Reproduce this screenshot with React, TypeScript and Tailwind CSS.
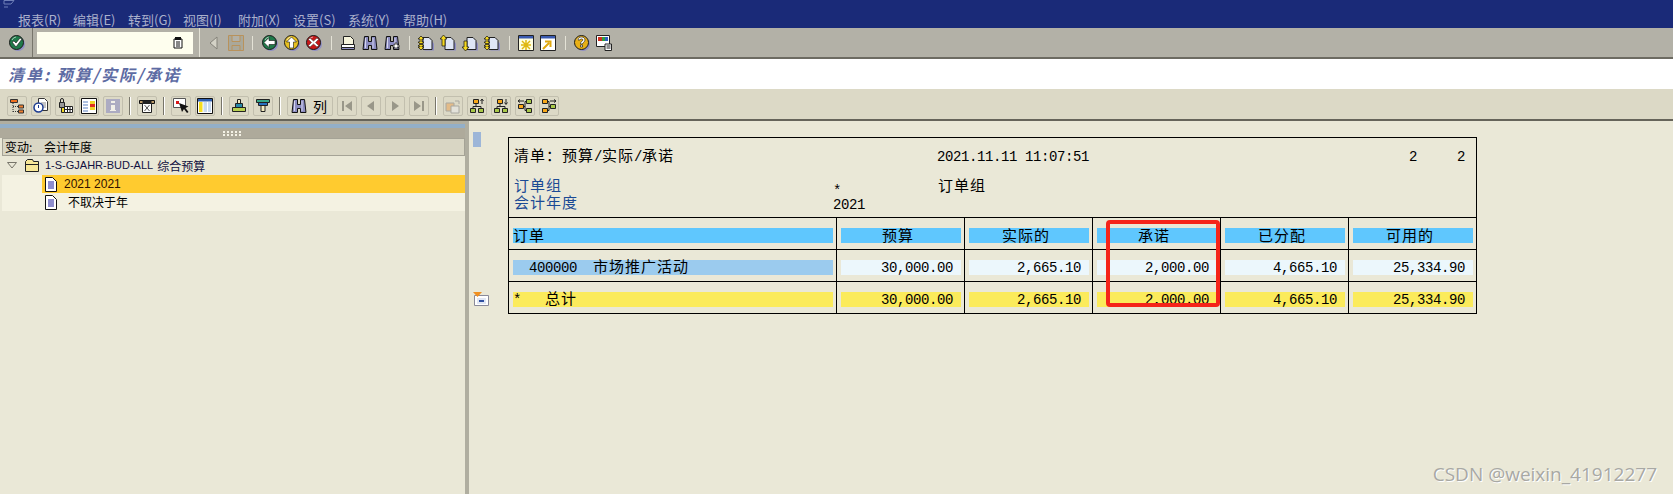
import React from 'react';

const menus = ['报表(R)', '编辑(E)', '转到(G)', '视图(I)', '附加(X)', '设置(S)', '系统(Y)', '帮助(H)'];

// SAP list font: latin cells are 8px wide, CJK cells 16px wide
const Mono = ({ t }: { t: string }) => {
  const runs = t.match(/[\u3000-\u9fff\uff00-\uffef]+|[^\u3000-\u9fff\uff00-\uffef]+/g) ?? [];
  return (
    <>
      {runs.map((r, i) =>
        /^[\u3000-\u9fff\uff00-\uffef]/.test(r) ? (
          <span key={i} className="font-['Noto_Sans_CJK_SC',sans-serif] text-[15px] tracking-[1px]">
            {r}
          </span>
        ) : (
          <span key={i} className="font-['Liberation_Mono',monospace] text-[14px] tracking-[-0.4px] whitespace-pre">
            {r}
          </span>
        ),
      )}
    </>
  );
};

const Ico = ({ children, s = 16 }: { children: React.ReactNode; s?: number }) => (
  <svg width={s} height={s} viewBox="0 0 16 16" className="shrink-0">
    {children}
  </svg>
);

const Round = ({ fill, mark, markStroke = '#111' }: { fill: string; mark: string; markStroke?: string }) => (
  <Ico>
    <circle cx="9" cy="9" r="7" fill="#8f8fc4" />
    <circle cx="7.500" cy="7.500" r="7" fill={fill} stroke="#1a1a1a" />
    <path d="M3 5a5 5 0 0 1 4-3" stroke="#ffffff99" fill="none" />
    <path d={mark} fill="#fff" stroke={markStroke} strokeWidth="0.6" />
  </Ico>
);

const DocArrow = ({ arrows }: { arrows: string }) => (
  <Ico>
    <path d="M6 4.500h6l3 3v7H5.500" fill="#8f8fc4" transform="translate(1 1)" />
    <path d="M5 2.500h6l3 3v9H5z" fill="#dfe6f6" stroke="#222" />
    <path d={arrows} fill="#f4d820" stroke="#111" strokeWidth="0.7" />
  </Ico>
);

const Binoculars = ({ plus }: { plus?: boolean }) => (
  <Ico>
    <path d="M2.500 1.500h4v5h3v-5h4l1.500 13h-5.500v-4h-3v4H1z" fill="#8c8cc0" stroke="#111" />
    <path d="M3.500 3v10M11 3v10" stroke="#d5d5ee" />
    {plus && <path d="M11 8h2v2h2v2h-2v2h-2v-2H9v-2h2z" fill="#fff" stroke="#111" strokeWidth="0.7" />}
  </Ico>
);

const SysSep = ({ ml = 'ml-[9px]' }: { ml?: string }) => <div className={`${ml} w-px h-[14px] bg-[#e4e2d6] shrink-0`} />;

const AppSep = () => <div className="mx-[2px] w-px h-[18px] bg-[#77756a] border-r border-white box-content shrink-0" />;

// button of the application toolbar
const Btn = ({ children, w = 'w-[20px]', off }: { children?: React.ReactNode; w?: string; off?: boolean }) => (
  <div className={`${w} h-[20px] shrink-0 flex items-center justify-center rounded-[2px] border border-[#c2bfae] bg-[#dcd9c6] ${off ? '[&>*]:opacity-60' : ''}`}>
    {children}
  </div>
);

const OrgUp = ({ down }: { down?: boolean }) => (
  <Ico>
    <path d="M4.500 1.500h5v4h-5z" fill="#f8a818" stroke="#222" />
    <path d="M1.500 10.500h5v4h-5zM9.500 10.500h5v4h-5z" fill="#a8c848" stroke="#222" />
    <path d="M7 5.500v3M4 10.500v-2h8v2" stroke="#222" fill="none" />
    <path d={down ? 'M13 1v5M11.500 4.500l1.500 2 1.500-2' : 'M13 6V1M11.500 3l1.500-2 1.500 2'} stroke="#222" fill="none" />
  </Ico>
);

const OrgSide = ({ right }: { right?: boolean }) => (
  <Ico>
    <g transform={right ? 'translate(16 0) scale(-1 1)' : undefined}>
      <path d="M1.500 6.500h5v4h-5z" fill={right ? '#a8c848' : '#f8a818'} stroke="#222" />
      <path d="M9.500 1.500h5v4h-5zM9.500 10.500h5v4h-5z" fill={right ? '#f8a818' : '#a8c848'} stroke="#222" />
      <path d="M6.500 8.500h1.500M8 3.500v9M8 3.500h1.500M8 12.500h1.500" stroke="#222" fill="none" />
      <path d="M1 3h6M3 1.500L1 3l2 1.500" stroke="#222" fill="none" />
    </g>
  </Ico>
);

const Page = () => (
  <svg width="12" height="15" viewBox="0 0 12 15" className="shrink-0">
    <path d="M.5.500h7l4 4v10H.5z" fill="#fff" stroke="#111" />
    <path d="M3 5h6M3 7h6M3 9h6M3 11h6" stroke="#1c1c9c" />
  </svg>
);

const Nav = ({ d }: { d: string }) => (
  <Btn off>
    <svg width="14" height="14" viewBox="0 0 14 14">
      <path d={d} fill="#6e6c62" />
    </svg>
  </Btn>
);

type Row = { label: string; pad: string; labelBg: string; cellBg: string; vals: string[] };

const colHeads = ['预算', '实际的', '承诺', '已分配', '可用的'];

const vals = ['30,000.00', '2,665.10', '2,000.00', '4,665.10', '25,334.90'];

const rows: Row[] = [
  { label: '400000  市场推广活动', pad: 'pl-[16px]', labelBg: 'bg-[#9bcbee]', cellBg: 'bg-[#ecf7fc]', vals },
  { label: '*   总计', pad: '', labelBg: 'bg-[#fbeb5b]', cellBg: 'bg-[#fbeb5b]', vals },
];

export default function App() {
  return (
    <div className="w-[1673px] h-[494px] overflow-hidden flex flex-col bg-[#eae8d7] text-black font-['Noto_Sans_CJK_SC',sans-serif]">
      {/* menu bar */}
      <div className="h-[28px] bg-[#1a2a78] relative flex items-end pl-[18px] shrink-0">
        <svg width="16" height="8" viewBox="0 0 16 8" className="absolute left-[1px] top-0">
          <path d="M3 .5h10L10 4H3z M3 7h4" stroke="#6f7fb8" fill="none" />
        </svg>
        {menus.map((m) => (
          <span key={m} className="w-[55px] shrink-0 text-[13px] leading-[16px] text-[#aab0cc]">
            {m}
          </span>
        ))}
      </div>

      {/* system toolbar */}
      <div className="h-[31px] shrink-0 bg-[#b3b1a7] border-b-2 border-[#6d6b62] flex items-center">
        <div className="w-[32px] shrink-0 flex justify-center pl-[1px]">
          <Round fill="#1f7a4a" mark="M3 7l2-1 2 2 4-5 2 1-6 8z" />
        </div>
        <div className="w-px h-full bg-[#77756c] shrink-0" />
        <div className="w-[156px] h-[22px] bg-[#fefeee] ml-[4px] flex items-center justify-end pr-[10px] shrink-0">
          <svg width="10" height="12" viewBox="0 0 10 12">
            <path d="M1 2h8v9H1z" fill="#fff" stroke="#111" />
            <path d="M2 0h6v3H2z" fill="#111" />
            <path d="M3 5h4M3 7h4M3 9h4" stroke="#111" />
          </svg>
        </div>
        <div className="w-px h-full bg-[#e4e2d6] ml-[6px] shrink-0" />
        <svg width="9" height="14" viewBox="0 0 9 14" className="ml-[9px] shrink-0">
          <path d="M8 1L1 7l7 6z" fill="#d4d2c6" stroke="#85837a" />
        </svg>
        <svg width="16" height="16" viewBox="0 0 16 16" className="ml-[10px] shrink-0">
          <path d="M.5.500h15v15H.5zM4 .5v6h8v-6M4 15.500v-5h8v5" fill="#aaa89a" stroke="#b8925c" />
        </svg>
        <SysSep ml="ml-[8px]" />
        <div className="ml-[9px] flex gap-[6px] shrink-0">
          <Round fill="#1f7a4a" mark="M2 7.500l5-5v3h6v4H7v3z" />
          <Round fill="#e8c020" mark="M7.500 2l5 5h-3v6h-4V7h-3z" />
          <Round fill="#c81818" mark="M4 3l3.500 3L11 3l1.500 1.500-3 3 3 3L11 12 7.500 9 4 12l-1.500-1.500 3-3-3-3z" markStroke="#444" />
        </div>
        <SysSep />
        <div className="ml-[8px] flex gap-[6px] shrink-0">
          <Ico>
            <path d="M3.500 1.500h7l3 3v5h-10z" fill="#f6f4dc" stroke="#222" />
            <path d="M1.500 9.500h13v3h-13z" fill="#fff" stroke="#222" />
            <path d="M1.500 12.500h13v2h-13z" fill="#8f8fc4" stroke="#222" />
          </Ico>
          <Binoculars />
          <Binoculars plus />
        </div>
        <SysSep />
        <div className="ml-[8px] flex gap-[6px] shrink-0">
          <DocArrow arrows="M3 1l3 3H4v3h2L3 10 0 7h2V4H0zM3 8l3 3H4v1h2l-3 3-3-3h2v-1H0z" />
          <DocArrow arrows="M3.500 0l3.500 4H5v7H2V4H0z" />
          <DocArrow arrows="M2 6h3v6h2l-3.500 4L0 12h2z" />
          <DocArrow arrows="M3 1l3 3H4v3h2L3 10 0 7h2V4H0zM3 8l3 3H4v1h2l-3 3-3-3h2v-1H0z" />
        </div>
        <SysSep />
        <div className="ml-[8px] flex gap-[6px] shrink-0">
          <Ico>
            <path d="M.5.500h15v15H.5z" fill="#fefee0" stroke="#222" />
            <path d="M1 1h14v2.500H1z" fill="#3a5ab0" />
            <path d="M4 6l8 8M12 6l-8 8M8 5v10M3 10h10" stroke="#e0b810" strokeWidth="1.500" />
          </Ico>
          <Ico>
            <path d="M.5.500h15v15H.5z" fill="#fff" stroke="#222" />
            <path d="M1 1h14v2.500H1z" fill="#3a5ab0" />
            <path d="M3 14l6-6M5 6.500h5.500V12" stroke="#e0a810" strokeWidth="2" fill="none" />
          </Ico>
        </div>
        <SysSep />
        <div className="ml-[8px] flex gap-[6px] shrink-0">
          <Round fill="#e8b018" mark="M4 5c0-4 7-4 7 0 0 2-2.500 2.500-2.500 4h-2c0-3 2.500-3 2.500-4 0-1.500-3-1.500-3 0zM6.500 10h2v2h-2z" />
          <Ico>
            <path d="M.5.500h13v11H.5z" fill="#fff" stroke="#222" />
            <path d="M2 2h4v4H2z" fill="#d03020" />
            <path d="M6 2h3v4H6z" fill="#30a040" />
            <path d="M9 2h3v4H9z" fill="#3060c0" />
            <path d="M9 9h6.500v6.500H9z" fill="#fff" stroke="#222" />
            <path d="M10.500 11h4M10.500 13h4" stroke="#222" />
          </Ico>
        </div>
      </div>

      {/* title */}
      <div className="h-[30px] shrink-0 bg-white flex items-center pl-[8px]">
        <span className="text-[16px] leading-none italic font-bold text-[#5d6ba3] tracking-[2px]">清单: 预算/实际/承诺</span>
      </div>

      {/* application toolbar */}
      <div className="h-[32px] shrink-0 bg-[#dcd9c6] border-b-2 border-[#66645a] flex items-center pl-[7px] pt-[4px] gap-[4px]">
        <Btn>
          <Ico>
            <path d="M1.500 1.500h7v3h-7z" fill="#f07020" stroke="#333" />
            <path d="M4 5v10M4 8.500h5M4 13.500h5" stroke="#333" strokeDasharray="1 1" fill="none" />
            <path d="M9.500 7h5v3h-5zM9.500 12h5v3h-5z" fill="#f08030" stroke="#333" />
          </Ico>
        </Btn>
        <Btn>
          <Ico>
            <path d="M5.500.500h6l3 3v9h-9z" fill="#fff" stroke="#333" />
            <path d="M8 5h5M8 7h5M8 9h5" stroke="#888" />
            <circle cx="5.500" cy="9.500" r="4.500" fill="#fff" stroke="#1a3a90" strokeWidth="1.500" />
            <path d="M5.500 7v3" stroke="#1a3a90" />
          </Ico>
        </Btn>
        <Btn>
          <Ico>
            <path d="M2.500 4.500h5v5h-5z" fill="#999" stroke="#222" />
            <path d="M3.500 4.500V2a1.500 1.500 0 0 1 3 0v2.500" fill="none" stroke="#222" />
            <path d="M4.500 9.500h3v5h-3z" fill="#f0d828" stroke="#222" />
            <path d="M7.500 8.500h8v6h-8zM10.500 8.500v6M13 8.500v6M7.500 11.500h8" fill="#fff" stroke="#222" />
          </Ico>
        </Btn>
        <Btn>
          <Ico>
            <path d="M.5.500h15v15H.5z" fill="#fff" stroke="#111" />
            <path d="M2 4h5M2 7h5M2 10h5M2 13h5" stroke="#5a80c0" />
            <path d="M9 3h5v3H9z" fill="#f0d828" />
            <path d="M9 6h5v3H9z" fill="#e03020" />
            <path d="M9 9h5v3H9z" fill="#f0d828" />
          </Ico>
        </Btn>
        <Btn off>
          <Ico>
            <path d="M1 1h14v14H1z" fill="#8d8dc0" />
            <path d="M6 3h4v2H6zM6 7h4v5h1v1H5v-1h1z" fill="#fff" />
          </Ico>
        </Btn>
        <AppSep />
        <Btn>
          <Ico>
            <path d="M.5 2.500h15v3h-15z" fill="#b89868" stroke="#111" />
            <path d="M3.500 2.500h9v3h-9z" fill="#222" />
            <path d="M3.500 5.500h9v9h-9z" fill="#fff" stroke="#222" />
            <path d="M5.500 7l5 6M10.500 7l-5 6" stroke="#555" />
          </Ico>
        </Btn>
        <AppSep />
        <Btn>
          <Ico>
            <path d="M.5.500h12v9H.5z" fill="#fff" stroke="#555" />
            <path d="M3 3h3v3H3z" fill="#d81818" />
            <path d="M6 5l3 9 2-3 3 4 1.500-1-3-4 3-1.500z" fill="#111" />
          </Ico>
        </Btn>
        <Btn>
          <Ico>
            <path d="M.5.500h15v15H.5z" fill="#fff" stroke="#111" />
            <path d="M1 1h14v2.500H1z" fill="#3060b0" />
            <path d="M2 4h3.500v10H2z" fill="#f4dc20" />
            <path d="M6.500 4h3.500v10H6.500z" fill="#c8daf0" />
            <path d="M11 4h3v10h-3z" fill="#c8daf0" />
          </Ico>
        </Btn>
        <AppSep />
        <Btn>
          <Ico>
            <path d="M6.500 1.500h3v4h-3z" fill="#f4ecc0" stroke="#222" />
            <path d="M4.500 5.500h7v4h-7z" fill="#2888a8" stroke="#222" />
            <path d="M1.500 9.500h13v4h-13z" fill="#b8d050" stroke="#222" />
          </Ico>
        </Btn>
        <Btn>
          <Ico>
            <path d="M1.500 1.500h13v3h-13z" fill="#38a888" stroke="#222" />
            <path d="M3.500 4.500h9v3h-9z" fill="#2870c0" stroke="#222" />
            <path d="M6 7.500h4v6H6z" fill="#f4ecc0" stroke="#222" />
          </Ico>
        </Btn>
        <AppSep />
        <Btn w="w-[46px]">
          <Binoculars />
          <span className="text-[14px] leading-none ml-[6px] mr-[2px]">列</span>
        </Btn>
        <Nav d="M2 2h2v10H2zM12 2L5 7l7 5z" />
        <Nav d="M10 2L3 7l7 5z" />
        <Nav d="M4 2l7 5-7 5z" />
        <Nav d="M10 2h2v10h-2zM2 2l7 5-7 5z" />
        <AppSep />
        <Btn off>
          <Ico>
            <path d="M1 5h8v8H1z" fill="#e8a860" stroke="#888" />
            <path d="M6 8h8v7H6z" fill="#e8e8e8" stroke="#888" />
            <path d="M10 3h4v3" stroke="#888" fill="none" />
          </Ico>
        </Btn>
        <Btn><OrgUp /></Btn>
        <Btn><OrgUp down /></Btn>
        <Btn><OrgSide /></Btn>
        <Btn><OrgSide right /></Btn>
      </div>

      {/* body */}
      <div className="flex-1 flex min-h-0">
        {/* left tree panel */}
        <div className="w-[469px] shrink-0 flex flex-col border-r-4 border-[#b0aea0] bg-[#eae8d7]">
          <div className="h-[3px] bg-[#b0aea0] shrink-0" />
          <div className="h-[4px] bg-[#93afc8] shrink-0" />
          <div className="h-[10px] bg-[#aeaa9b] flex justify-center items-center shrink-0">
            <div className="w-[18px] h-[7px] ml-[-2px] bg-[repeating-linear-gradient(0deg,#aeaa9b_0_1px,transparent_1px_3px),repeating-linear-gradient(90deg,#f4f2e6_0_2px,#aeaa9b_2px_4px)]" />
          </div>
          <div className="h-[18px] shrink-0 ml-[2px] bg-[#d9d6c4] border border-[#a5a396] flex items-center pl-[2px] text-[12px] leading-none whitespace-pre">
            <span className="w-[39px]">变动:</span>
            <span>会计年度</span>
          </div>
          <div className="h-[19px] shrink-0 ml-[2px] flex items-center pl-[5px] text-[12px] text-[#101040] leading-none">
            <svg width="10" height="7" viewBox="0 0 10 7" className="shrink-0">
              <path d="M.5.500h9L5 6z" fill="none" stroke="#77756a" />
            </svg>
            <svg width="16" height="13" viewBox="0 0 16 13" className="ml-[7px] mr-[5px] shrink-0">
              <path d="M1.500 2.500l2-2h5l1 2h5v10h-13z" fill="#f8e898" stroke="#222" />
              <path d="M1.500 5.500h13" stroke="#222" />
            </svg>
            <span className="text-[11px] font-['Liberation_Sans',sans-serif]">1-S-GJAHR-BUD-ALL</span>
            <span className="ml-[4px]">综合预算</span>
          </div>
          <div className="h-[18px] shrink-0 ml-[2px] pl-[40px] flex bg-[#f4f2e2]">
            <div className="flex-1 flex items-center bg-[#ffcb2f] pl-[3px] text-[12px] font-['Liberation_Sans',sans-serif]">
              <Page />
              <span className="ml-[7px] text-[#301000]">2021 2021</span>
            </div>
          </div>
          <div className="h-[18px] shrink-0 ml-[2px] pl-[43px] flex items-center bg-[#f4f2e2] text-[12px] leading-none">
            <Page />
            <span className="ml-[11px]">不取决于年</span>
          </div>
        </div>

        {/* report */}
        <div className="flex-1 relative pl-[39px] pt-[16px]">
          <div className="absolute left-[4px] top-[11px] w-[8px] h-[15px] bg-[#9db6d8]" />
          <svg width="16" height="14" viewBox="0 0 16 14" className="absolute left-[4px] top-[171px]">
            <path d="M1.500 3.500h14v10h-14z" fill="#fff" stroke="#8a8a9a" />
            <path d="M0 0h9L4.500 5z" fill="#f09020" />
            <path d="M4 6h9v6H4z" fill="#e0e6f4" />
            <path d="M6 8h5v2H6z" fill="#3050a0" />
          </svg>

          <div className="w-[969px] border border-black leading-none">
            {/* report header */}
            <div className="h-[80px] relative border-b border-black">
              <span className="absolute left-[5px] top-[8px] leading-[16px]"><Mono t="清单：预算/实际/承诺" /></span>
              <span className="absolute left-[428px] top-[8px] leading-[16px]"><Mono t="2021.11.11 11:07:51" /></span>
              <span className="absolute left-[900px] top-[8px] leading-[16px]"><Mono t="2" /></span>
              <span className="absolute left-[948px] top-[8px] leading-[16px]"><Mono t="2" /></span>
              <span className="absolute left-[5px] top-[38px] leading-[16px] text-[#1b4a94]"><Mono t="订单组" /></span>
              <span className="absolute left-[5px] top-[55px] leading-[16px] text-[#1b4a94]"><Mono t="会计年度" /></span>
              <span className="absolute left-[324px] top-[42px] leading-[16px]"><Mono t="*" /></span>
              <span className="absolute left-[429px] top-[38px] leading-[16px]"><Mono t="订单组" /></span>
              <span className="absolute left-[324px] top-[56px] leading-[16px]"><Mono t="2021" /></span>
            </div>
            {/* column heads */}
            <div className="flex h-[32px] border-b border-black">
              <div className="w-[328px] shrink-0 border-r border-black pl-[4px] pr-[3px] pt-[10px]">
                <div className="h-[15px] bg-[#5fc7fe] flex items-center pb-[4px]"><span><Mono t="订单" /></span></div>
              </div>
              {colHeads.map((h, i) => (
                <div key={h} className={`${i < 4 ? 'w-[128px] border-r border-black' : 'w-[127px]'} shrink-0 pl-[4px] pt-[10px]`}>
                  <div className="w-[120px] h-[15px] bg-[#5fc7fe] flex items-center justify-center pr-[6px] pb-[4px]"><span><Mono t={h} /></span></div>
                </div>
              ))}
            </div>
            {rows.map((r, ri) => (
              <div key={ri} className={`flex ${ri === 0 ? 'h-[32px] border-b border-black' : 'h-[31px]'}`}>
                <div className="w-[328px] shrink-0 border-r border-black pl-[4px] pr-[3px] pt-[10px]">
                  <div className={`h-[15px] ${r.labelBg} flex items-center pb-[4px] ${r.pad}`}><span><Mono t={r.label} /></span></div>
                </div>
                {r.vals.map((v, i) => (
                  <div key={i} className={`${i < 4 ? 'w-[128px] border-r border-black' : 'w-[127px]'} shrink-0 pl-[4px] pt-[10px]`}>
                    <div className={`w-[120px] h-[15px] ${r.cellBg} flex items-center justify-end pr-[8px] pb-[4px]`}><span><Mono t={v} /></span></div>
                  </div>
                ))}
              </div>
            ))}
          </div>

          {/* red annotation drawn over the table */}
          <div className="absolute left-[637px] top-[99px] w-[114px] h-[87px] border-[4px] border-[#f5241a] rounded-[4px]" />
          <div className="absolute right-[16px] bottom-[10px] text-[19px] leading-none text-[#a8a8a4] [text-shadow:1px_1px_0_#fff] font-['Open_Sans',sans-serif]">
            CSDN @weixin_41912277
          </div>
        </div>
      </div>
    </div>
  );
}
